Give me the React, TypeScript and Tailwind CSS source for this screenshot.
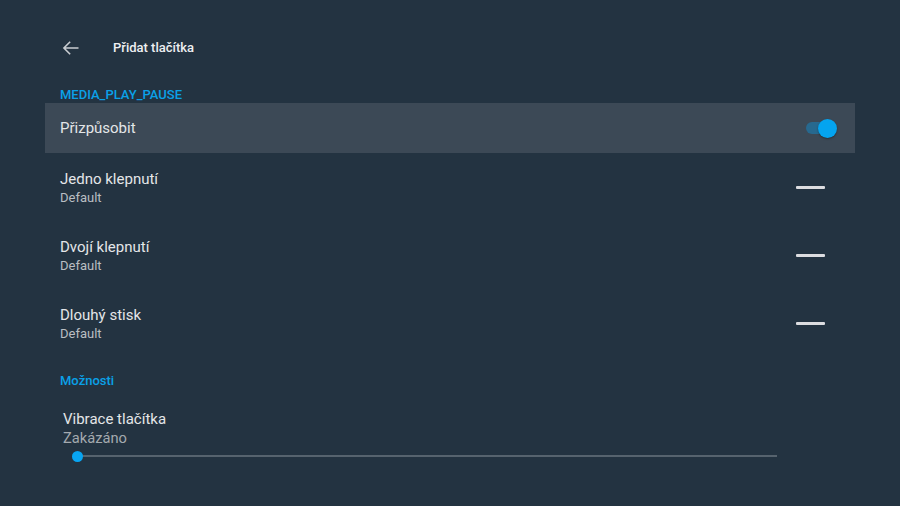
import React from "react";

const rows = [
  { title: "Jedno klepnutí", sub: "Default" },
  { title: "Dvojí klepnutí", sub: "Default" },
  { title: "Dlouhý stisk", sub: "Default" },
];

function BackArrow() {
  return (
    <svg width="20" height="20" viewBox="0 0 24 24" fill="none">
      <path d="M21 12H4M11 4.5L3.5 12l7.5 7.5" stroke="#c9cdd1" strokeWidth="1.9" />
    </svg>
  );
}

export default function App() {
  return (
    <div
      className="w-[900px] h-[506px] bg-[#233341] overflow-hidden"
      style={{ fontFamily: "Roboto, 'Noto Sans', sans-serif" }}
    >
      {/* header */}
      <div className="flex items-center h-6 mt-[36px] pl-[61px]">
        <BackArrow />
        <span className="ml-[32px] text-[13px] font-medium text-[#eef0f2]">Přidat tlačítka</span>
      </div>

      <div className="mt-[27px] pl-[60px] text-[13px] leading-4 font-medium text-[#0aa1e8]">
        MEDIA_PLAY_PAUSE
      </div>

      {/* customize row */}
      <div className="mx-[45px] h-[50px] bg-[#3c4956] flex items-center justify-between pl-[15px] pr-[18px]">
        <span className="text-[15px] text-[#e4e6e8]">Přizpůsobit</span>
        <div className="relative w-[31px] h-[19px] flex items-center">
          <div className="w-[26px] h-[12px] rounded-full bg-[#27698f]" />
          <div className="absolute right-0 top-0 w-[19px] h-[19px] rounded-full bg-[#04a4f0] shadow-[0_1px_2px_rgba(0,0,0,0.35)]" />
        </div>
      </div>

      {rows.map((r) => (
        <div key={r.title} className="h-[68px] flex items-center justify-between pl-[60px] pr-[75px]">
          <div className="flex flex-col mt-[1px]">
            <span className="text-[15px] leading-5 text-[#e4e6e8]">{r.title}</span>
            <span className="mt-px text-[13px] leading-4 text-[#b9bec3]">{r.sub}</span>
          </div>
          <div className="w-[29px] h-[3px] bg-[#dcdde0] rounded-[1px]" />
        </div>
      ))}

      <div className="mt-[16px] pl-[60px] text-[13px] leading-4 font-medium text-[#0aa1e8]">Možnosti</div>

      <div className="mt-[20px] pl-[63px]">
        <div className="text-[15px] leading-5 text-[#e4e6e8]">Vibrace tlačítka</div>
        <div className="text-[14.7px] leading-[18px] text-[#a4aaaf]">Zakázáno</div>
      </div>

      <div className="mt-[3px] ml-[77px] w-[700px] h-[12px] relative flex items-center">
        <div className="w-full h-[2px] bg-[#56636e]" />
        <div className="absolute left-[-5px] top-[0.5px] w-[11px] h-[11px] rounded-full bg-[#08a5f2]" />
      </div>
    </div>
  );
}
